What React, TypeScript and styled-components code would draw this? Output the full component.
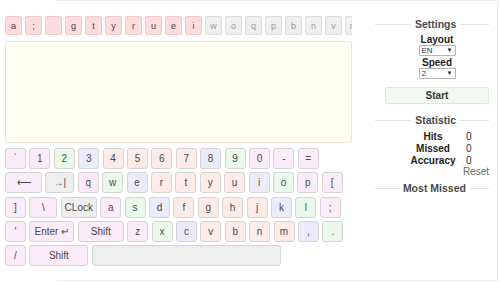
import React, { FC } from 'react'
import styled, { createGlobalStyle } from 'styled-components'

const GlobalStyle = createGlobalStyle`
  body {
    margin: 0;
    background: #fff;
    font-family: "Liberation Sans", Arial, sans-serif;
    color: #333;
  }
`

const PINK = '#fcebf8'
const GREEN = '#eafaea'
const BLUE = '#ebebfb'
const SALMON = '#fdebe8'
const GRAY = '#eeeeee'

type KeyDef = { label: string; color: string; width?: number }

const p = (label: string, w?: number): KeyDef => ({ label, color: PINK, width: w })
const g = (label: string): KeyDef => ({ label, color: GREEN })
const b = (label: string): KeyDef => ({ label, color: BLUE })
const s = (label: string): KeyDef => ({ label, color: SALMON })

const rows: KeyDef[][] = [
  [p('`'), p('1'), g('2'), b('3'), s('4'), s('5'), s('6'), s('7'), b('8'), g('9'), p('0'), p('-'), p('=')],
  [p('⟵', 37), { label: '→|', color: GRAY, width: 29 }, p('q'), g('w'), b('e'), s('r'), s('t'), s('y'), s('u'), b('i'), g('o'), p('p'), p('[')],
  [p(']'), p('\\', 28), { label: 'CLock', color: GRAY, width: 36 }, p('a'), g('s'), b('d'), s('f'), s('g'), s('h'), s('j'), b('k'), g('l'), p(';')],
  [p("'"), p('Enter ↵', 45), p('Shift', 46), p('z'), g('x'), b('c'), s('v'), s('b'), s('n'), s('m'), b(','), g('.')],
  [p('/'), p('Shift', 59), { label: '', color: GRAY, width: 189 }],
]

const letters: { ch: string; hit: boolean }[] = [
  ...['a', ';', '', 'g', 't', 'y', 'r', 'u', 'e', 'i'].map(ch => ({ ch, hit: true })),
  ...['w', 'o', 'q', 'p', 'b', 'n', 'v', 'm'].map(ch => ({ ch, hit: false })),
]

const Page = styled.div`
  position: relative;
  display: flex;
  width: 500px;
  height: 282px;
  overflow: hidden;
  &::before {
    content: '';
    position: absolute;
    left: 57px;
    top: 0;
    right: 2px;
    bottom: 1px;
    border: 1px solid #ececec;
    border-left: none;
    pointer-events: none;
  }
`

const LeftColumn = styled.div`
  position: relative;
  width: 347px;
  padding: 16px 0 0 5px;
`

const LetterRow = styled.div`
  display: flex;
  gap: 3px;
  width: 347px;
  height: 19px;
  overflow: hidden;
`

const LetterKey = styled.div<{ $hit: boolean }>`
  flex: 0 0 17px;
  height: 19px;
  box-sizing: border-box;
  border: 1px solid ${props => (props.$hit ? '#f2caca' : '#dedede')};
  border-radius: 2px;
  background: ${props => (props.$hit ? '#fcdcdc' : '#efefef')};
  color: ${props => (props.$hit ? '#444' : '#999')};
  font-size: 9px;
  display: flex;
  align-items: center;
  justify-content: center;
`

const TextBox = styled.div`
  margin-top: 6px;
  width: 347px;
  height: 102px;
  box-sizing: border-box;
  background: #fffff2;
  border: 1px solid #e6e6d6;
  border-radius: 3px;
`

const Keyboard = styled.div`
  margin-top: 5px;
  display: flex;
  flex-direction: column;
  gap: 3.3px;
`

const KeyRow = styled.div`
  display: flex;
  gap: 3.4px;
`

const Key = styled.div<{ $color: string; $width: number }>`
  flex: 0 0 ${props => props.$width}px;
  height: 21px;
  box-sizing: border-box;
  background: ${props => props.$color};
  border: 1px solid #d4d4d4;
  border-radius: 3px;
  font-size: 10px;
  color: #4a4a4a;
  display: flex;
  align-items: center;
  justify-content: center;
`

const Panel = styled.div`
  position: relative;
  margin-left: 33px;
  width: 104px;
  padding-top: 17px;
  display: flex;
  flex-direction: column;
  align-items: center;
`

const Header = styled.div<{ $top?: number }>`
  margin-top: ${props => props.$top ?? 0}px;
  margin-left: -10px;
  width: calc(100% + 10px);
  display: flex;
  align-items: center;
  gap: 4px;
  font-size: 10.5px;
  font-weight: bold;
  line-height: 14px;
  color: #4a4a4a;
  &::before,
  &::after {
    content: '';
    flex: 1;
    height: 1px;
    background: #e2e2e2;
  }
  &::before {
    flex: 1.25;
  }
`

const Label = styled.div<{ $top: number }>`
  margin-top: ${props => props.$top}px;
  font-size: 10px;
  font-weight: bold;
  line-height: 10px;
  color: #222;
`

const SelectBox = styled.div`
  position: relative;
  width: 37px;
  height: 11px;
`

const Select = styled.select`
  appearance: none;
  display: block;
  width: 37px;
  height: 11px;
  padding: 0 0 0 2px;
  margin: 0;
  font-size: 8px;
  line-height: 9px;
  font-family: "Liberation Sans", Arial, sans-serif;
  color: #333;
  border: 1px solid #b5b5b5;
  border-radius: 1px;
  background: #fff;
`

const Arrow = styled.span`
  position: absolute;
  right: 3px;
  top: 1px;
  font-size: 6px;
  line-height: 9px;
  color: #222;
  pointer-events: none;
`

const StartButton = styled.button`
  margin-top: 8px;
  width: 104px;
  height: 17px;
  padding: 0;
  background: #effbef;
  border: 1px solid #d6efd6;
  border-radius: 2px;
  font-family: "Liberation Sans", Arial, sans-serif;
  font-size: 10px;
  font-weight: bold;
  color: #333;
`

const StatGrid = styled.div`
  margin-top: 4px;
  align-self: flex-start;
  margin-left: 20px;
  display: grid;
  grid-template-columns: 56px 26px;
  column-gap: 5px;
  font-size: 10px;
  line-height: 11.8px;
`

const StatName = styled.div`
  text-align: center;
  font-weight: bold;
  color: #222;
`

const StatValue = styled.div`
  color: #333;
`

const ResetLink = styled.div`
  align-self: flex-end;
  font-size: 10px;
  line-height: 12px;
  color: #666;
`

const stats = [
  { name: 'Hits', value: 0 },
  { name: 'Missed', value: 0 },
  { name: 'Accuracy', value: 0 },
]

const Dropdown: FC<{ value: string; options: string[] }> = ({ value, options }) => (
  <SelectBox>
    <Select defaultValue={value}>
      {options.map(o => <option key={o}>{o}</option>)}
    </Select>
    <Arrow>▼</Arrow>
  </SelectBox>
)

const App: FC = () => {
  return (<>
    <GlobalStyle />
    <Page>
      <LeftColumn>
        <LetterRow>
          {letters.map((item, index) => (
            <LetterKey key={index} $hit={item.hit}>{item.ch}</LetterKey>
          ))}
        </LetterRow>
        <TextBox />
        <Keyboard>
          {rows.map((row, r) => (
            <KeyRow key={r}>
              {row.map((k, i) => (
                <Key key={i} $color={k.color} $width={k.width ?? 21}>{k.label}</Key>
              ))}
            </KeyRow>
          ))}
        </Keyboard>
      </LeftColumn>
      <Panel>
        <Header>Settings</Header>
        <Label $top={4}>Layout</Label>
        <Dropdown value="EN" options={['EN', 'RU']} />
        <Label $top={2}>Speed</Label>
        <Dropdown value="2" options={['1', '2', '3']} />
        <StartButton>Start</StartButton>
        <Header $top={9}>Statistic</Header>
        <StatGrid>
          {stats.map(item => (
            <React.Fragment key={item.name}>
              <StatName>{item.name}</StatName>
              <StatValue>{item.value}</StatValue>
            </React.Fragment>
          ))}
        </StatGrid>
        <ResetLink>Reset</ResetLink>
        <Header $top={3}>Most Missed</Header>
      </Panel>
    </Page>
  </>)
}

export default App
